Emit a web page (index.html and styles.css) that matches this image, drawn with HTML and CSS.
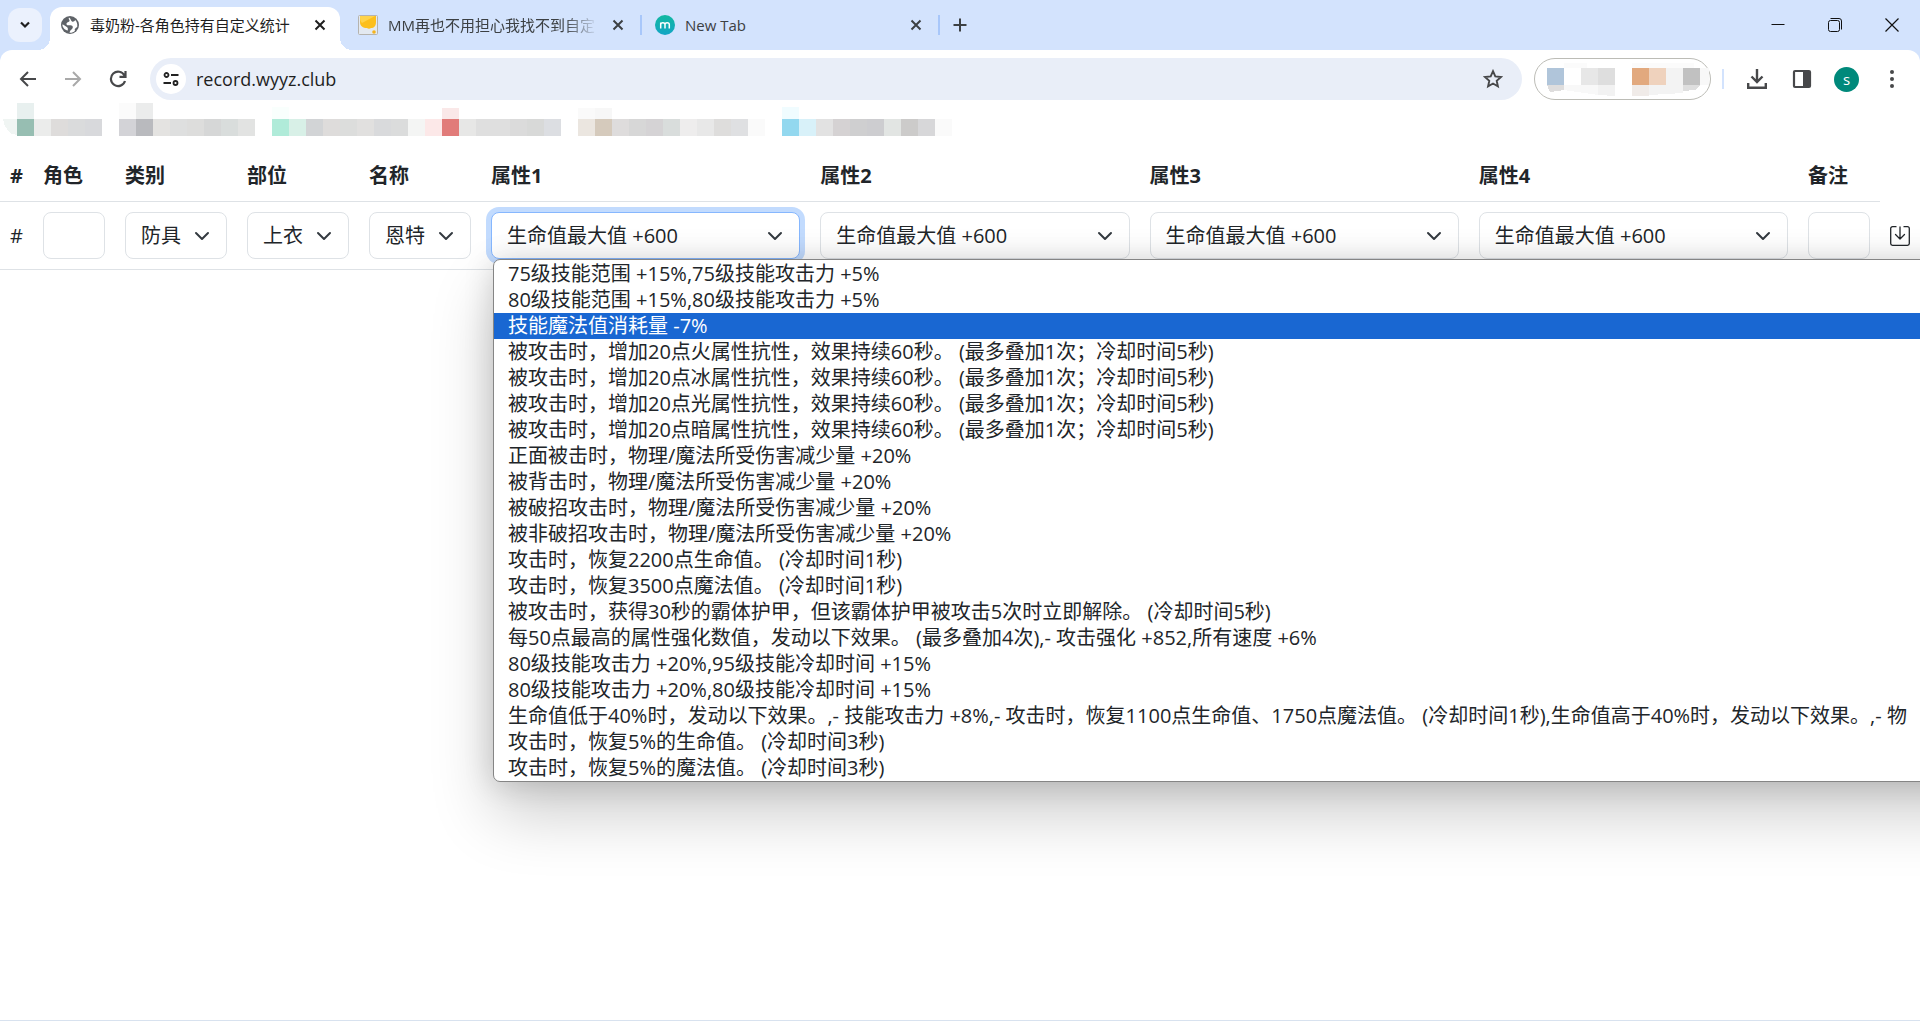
FILE: index.html
```html
<!DOCTYPE html>
<html lang="zh-CN">
<head>
<meta charset="utf-8">
<meta name="viewport" content="width=device-width, initial-scale=1">
<title>毒奶粉-各角色持有自定义统计</title>
<link rel="stylesheet" href="styles.css">
</head>
<body>
<svg class="defs" aria-hidden="true">
  <symbol id="x" viewBox="0 0 12 12"><path d="M1.5 1.5l9 9M10.500 1.500l-9 9" fill="none" stroke="currentColor" stroke-width="2"/></symbol>
  <symbol id="chevron" viewBox="0 0 16 16"><path d="m2 5 6 6 6-6" fill="none" stroke="#343a40" stroke-linecap="round" stroke-linejoin="round" stroke-width="2"/></symbol>
</svg>

<header class="browser">
  <div class="tab-strip">
    <button class="tab-search" aria-label="搜索标签页"><svg width="12" height="12" viewBox="0 0 12 12"><path d="M2 3.500l4 4 4-4" fill="none" stroke="#1f1f1f" stroke-width="2.200"/></svg></button>
    <div class="tab tab-active">
      <svg width="20" height="20" viewBox="0 0 20 20"><circle cx="10" cy="10" r="9" fill="#5f6368"/><path d="M9 2.500c-1 2 1 2 .5 3.500s-3 1-3 3 3 1 5 1.500 1.500 3 0 4-1.500 2-2 3.200c2 .2 4-.5 5.500-2-1-1.500.5-2.500 2.200-3.700.5-3-.5-5.500-2-7-.7 1.500-2 2-3.200 1.500S11 3.500 9 2.500zM2.300 9.500c1.500 0 3 1.500 4.500 2.500s1 2 1 3.500c-3-.5-5.300-3-5.500-6z" fill="#fff"/></svg>
      <span class="tab-title">毒奶粉-各角色持有自定义统计</span>
      <button class="tab-close" aria-label="关闭"><svg width="12" height="12"><use href="#x"/></svg></button>
    </div>
    <div class="tab tab-second">
      <svg width="20" height="20" viewBox="0 0 20 20"><rect x=".5" y=".5" width="19" height="19" rx="1" fill="#e3e9f0" stroke="#b5b3ae"/><path d="M2 1h16v6c0 4-2 6-5 6-1 1-3 1-4 0C5 13 2 11 2 7z" fill="#fcbf1c"/><path d="M2 1h15L4 8C2 6 2 4 2 1z" fill="#ffd34a"/><circle cx="16" cy="17" r="1.800" fill="#f5b31b"/></svg>
      <span class="tab-title tab-title-fade">MM再也不用担心我找不到自定</span>
      <button class="tab-close" aria-label="关闭"><svg width="12" height="12"><use href="#x"/></svg></button>
    </div>
    <div class="tab tab-third">
      <svg width="20" height="20" viewBox="0 0 20 20"><defs><linearGradient id="teal" x2="0" y2="1"><stop stop-color="#12b8a0"/><stop offset="1" stop-color="#12a5c5"/></linearGradient></defs><circle cx="10" cy="10" r="10" fill="url(#teal)"/><path d="M5.700 13.500V7.500M5.700 9.500c0-2.500 4.300-2.500 4.300 0v4M10 9.500c0-2.500 4.300-2.500 4.300 0v4" fill="none" stroke="#fff" stroke-width="1.500"/></svg>
      <span class="tab-title">New Tab</span>
      <button class="tab-close" aria-label="关闭"><svg width="12" height="12"><use href="#x"/></svg></button>
    </div>
    <button class="new-tab" aria-label="新标签页"><svg width="14" height="14" viewBox="0 0 14 14"><path d="M7 .5v13M.5 7h13" stroke="#3c4043" stroke-width="2"/></svg></button>
    <div class="window-controls">
      <button aria-label="最小化"><svg width="14" height="14" viewBox="0 0 14 14"><path d="M.5 6.500h13" stroke="#111"/></svg></button>
      <button aria-label="还原"><svg width="14" height="14" viewBox="0 0 14 14"><rect x=".5" y="2.500" width="11" height="11" rx="2" fill="none" stroke="#111"/><path d="M2.500.5H11a2.500 2.500 0 0 1 2.500 2.500v8.500" fill="none" stroke="#111"/></svg></button>
      <button aria-label="关闭窗口"><svg width="14" height="14" viewBox="0 0 14 14"><path d="M.5.5l13 13M13.500.5l-13 13" stroke="#111" stroke-width="1.200"/></svg></button>
    </div>
  </div>

  <div class="toolbar">
    <div class="nav">
      <button aria-label="后退"><svg width="18" height="18" viewBox="0 0 18 18"><path d="M17 9H2M9 2L2 9l7 7" fill="none" stroke="#47484a" stroke-width="2"/></svg></button>
      <button aria-label="前进"><svg width="18" height="18" viewBox="0 0 18 18"><path d="M1 9h15M9 2l7 7-7 7" fill="none" stroke="#a9a9a9" stroke-width="2"/></svg></button>
      <button aria-label="刷新"><svg width="18" height="18" viewBox="0 0 18 18"><path d="M15.500 5.500A7.200 7.200 0 1 0 16 11M16.500 1v5.800h-6" fill="none" stroke="#47484a" stroke-width="2.200"/></svg></button>
    </div>
    <div class="omnibox">
      <button class="site-info" aria-label="网站信息"><svg width="16" height="16" viewBox="0 0 16 16"><circle cx="3.500" cy="4" r="2" fill="none" stroke="#222" stroke-width="1.800"/><circle cx="12.500" cy="12" r="2" fill="none" stroke="#222" stroke-width="1.800"/><path d="M8 4h7.500M.5 12H8" stroke="#222" stroke-width="2"/></svg></button>
      <input class="url" type="text" aria-label="地址" value="record.wyyz.club">
      <button class="star" aria-label="收藏"><svg width="20" height="20" viewBox="0 0 20 20"><path d="M10 2.200l2.300 5.200 5.700.6-4.300 3.800 1.200 5.600L10 14.500l-4.900 2.900 1.200-5.600L2 8l5.700-.6z" fill="none" stroke="#47484a" stroke-width="1.900"/></svg></button>
    </div>
    <svg class="extensions" width="178" height="42" viewBox="0 0 178 42" role="img" aria-label="扩展程序">
      <rect x=".5" y=".5" width="176" height="41" rx="20.500" fill="#fff" stroke="#bcbcb6"/>
      <g shape-rendering="crispEdges"><path d="M13 10h17v17H13z" fill="#b0c5da"/><path d="M13 27h17v5l-14 2z" fill="#dedddd"/><path d="M30 5h23v5H30zM98 5h62v5H98z" fill="#fbfbfb"/><path d="M47 10h17v17H47z" fill="#e7e7e7"/><path d="M64 10h17v17H64z" fill="#dedede"/><path d="M30 27h34v10l-34-5z" fill="#f8f8f8"/><path d="M64 27h17v11l-17-1z" fill="#f2f2f2"/><path d="M98 10h17v17H98z" fill="#e2a97e"/><path d="M115 10h17v17h-17z" fill="#efd2bd"/><path d="M98 27h17v11H98z" fill="#f0ebe8"/><path d="M115 27h34v8l-34 2zM132 10h17v17h-17z" fill="#f3f3f3"/><path d="M149 10h17v17h-17z" fill="#c1c1c1"/><path d="M149 27h17l-5 5-12 1z" fill="#dedede"/><path d="M166 10h9v17h-9z" fill="#f8f8f8"/></g>
    </svg>
    <div class="actions">
      <span class="rule"></span>
      <button aria-label="下载"><svg width="20" height="20" viewBox="0 0 20 20"><path d="M10 0v13M4.500 7.500L10 13l5.500-5.500M1.200 14v4.800h17.600V14" fill="none" stroke="#47484a" stroke-width="2.400"/></svg></button>
      <button aria-label="侧边栏"><svg width="20" height="20" viewBox="0 0 20 20"><rect x="2" y="2" width="16" height="16" rx="1" fill="none" stroke="#47484a" stroke-width="2.200"/><path d="M11 2h7v16h-7z" fill="#47484a"/></svg></button>
      <button class="avatar" aria-label="个人资料">s</button>
      <button aria-label="菜单"><svg width="20" height="20" viewBox="0 0 20 20" fill="#47484a"><circle cx="10" cy="3" r="2"/><circle cx="10" cy="10" r="2"/><circle cx="10" cy="17" r="2"/></svg></button>
    </div>
  </div>

  <div class="bookmarks">
    <svg width="960" height="34" viewBox="0 0 960 34" shape-rendering="crispEdges" role="img" aria-label="书签">
      <path d="M17 0h17v16H17z" fill="#e8f0ef"/><path d="M119 0h17v16h-17z" fill="#fbfbfb"/><path d="M136 0h17v16h-17z" fill="#ebecec"/><path d="M272 4h17v12h-17z" fill="#f9fffd"/><path d="M442 5h17v11h-17z" fill="#fae8e8"/><path d="M578 5h17v11h-17z" fill="#fafafa"/><path d="M595 5h17v11h-17z" fill="#f7f7f7"/><path d="M782 4h17v12h-17z" fill="#f0fcff"/>
      <path d="M3 16h14v16c-8 0-13-8-14-16z" fill="#f0f5f3"/>
      <g transform="translate(0 16)">
        <path d="M17 0h17v17H17z" fill="#97beb2"/><path d="M34 0h17v17H34z" fill="#ebeceb"/><path d="M51 0h17v17H51z" fill="#dedcdb"/><path d="M68 0h17v17H68z" fill="#dadbdc"/><path d="M85 0h17v17H85z" fill="#d8d9dc"/>
        <path d="M119 0h17v17h-17z" fill="#d3d3d7"/><path d="M136 0h17v17h-17z" fill="#b9babe"/><path d="M153 0h17v17h-17z" fill="#e4e3e1"/><path d="M170 0h17v17h-17z" fill="#dedfdf"/><path d="M187 0h17v17h-17z" fill="#dddddc"/><path d="M204 0h17v17h-17z" fill="#d6d7d7"/><path d="M221 0h17v17h-17z" fill="#d9dddc"/><path d="M238 0h17v17h-17z" fill="#e2e3e2"/>
        <path d="M272 0h17v17h-17z" fill="#b0ebd9"/><path d="M289 0h17v17h-17z" fill="#d8f0e7"/><path d="M306 0h17v17h-17z" fill="#d2d4d6"/><path d="M323 0h17v17h-17z" fill="#dedcdb"/><path d="M340 0h17v17h-17z" fill="#dcdddc"/><path d="M357 0h17v17h-17z" fill="#e1e0df"/><path d="M374 0h17v17h-17z" fill="#d9dadc"/><path d="M391 0h17v17h-17z" fill="#dbdcdc"/><path d="M408 0h17v17h-17z" fill="#f4f5f4"/>
        <path d="M425 0h17v17h-17z" fill="#fce8e8"/><path d="M442 0h17v17h-17z" fill="#e17b79"/><path d="M459 0h17v17h-17z" fill="#e7e7e6"/><path d="M476 0h34v17h-34z" fill="#dfdfdf"/><path d="M510 0h17v17h-17z" fill="#dbdbdb"/><path d="M527 0h17v17h-17z" fill="#d8d9d8"/><path d="M544 0h17v17h-17z" fill="#dcdee2"/>
        <path d="M578 0h17v17h-17z" fill="#ebe6e0"/><path d="M595 0h17v17h-17z" fill="#d5cabc"/><path d="M612 0h17v17h-17z" fill="#dedcdc"/><path d="M629 0h17v17h-17z" fill="#d7d7d7"/><path d="M646 0h17v17h-17z" fill="#d5d3d5"/><path d="M663 0h17v17h-17z" fill="#d9dddc"/><path d="M680 0h17v17h-17z" fill="#eeeded"/><path d="M697 0h17v17h-17z" fill="#e8e8e8"/><path d="M714 0h17v17h-17z" fill="#dedddc"/><path d="M731 0h17v17h-17z" fill="#dfe0e2"/><path d="M748 0h17v17h-17z" fill="#fafafa"/>
        <path d="M782 0h17v17h-17z" fill="#93d8ef"/><path d="M799 0h17v17h-17z" fill="#d8f1f9"/><path d="M816 0h17v17h-17z" fill="#e2e2e2"/><path d="M833 0h17v17h-17z" fill="#d5d2d3"/><path d="M850 0h17v17h-17z" fill="#cfcfd0"/><path d="M867 0h17v17h-17z" fill="#cdcdd0"/><path d="M884 0h17v17h-17z" fill="#e2e5e3"/><path d="M901 0h17v17h-17z" fill="#cccbca"/><path d="M918 0h17v17h-17z" fill="#d7d7d9"/><path d="M935 0h17v17h-17z" fill="#fafafa"/>
      </g>
    </svg>
  </div>
</header>

<main>
  <table class="records">
    <colgroup><col class="col-index"><col class="col-text"><col class="col-kind"><col class="col-kind"><col class="col-kind"><col><col><col><col><col class="col-text"><col class="col-save"></colgroup>
    <thead>
      <tr><th scope="col">#</th><th scope="col">角色</th><th scope="col">类别</th><th scope="col">部位</th><th scope="col">名称</th><th scope="col">属性1</th><th scope="col">属性2</th><th scope="col">属性3</th><th scope="col">属性4</th><th scope="col">备注</th></tr>
    </thead>
    <tbody>
      <tr>
        <td>#</td>
        <td><input class="field" type="text" aria-label="角色"></td>
        <td><div class="select"><select class="field" aria-label="类别"><option>防具</option></select><svg width="16" height="16"><use href="#chevron"/></svg></div></td>
        <td><div class="select"><select class="field" aria-label="部位"><option>上衣</option></select><svg width="16" height="16"><use href="#chevron"/></svg></div></td>
        <td><div class="select"><select class="field" aria-label="名称"><option>恩特</option></select><svg width="16" height="16"><use href="#chevron"/></svg></div></td>
        <td>
          <div class="select">
            <select class="field field-focus" aria-label="属性1"><option>生命值最大值 +600</option></select><svg width="16" height="16"><use href="#chevron"/></svg>
            <ul class="options" role="listbox" aria-label="属性1">
              <li role="option">75级技能范围 +15%,75级技能攻击力 +5%</li>
              <li role="option">80级技能范围 +15%,80级技能攻击力 +5%</li>
              <li role="option" class="highlighted" aria-selected="true">技能魔法值消耗量 -7%</li>
              <li role="option">被攻击时，增加20点火属性抗性，效果持续60秒。 (最多叠加1次；冷却时间5秒)</li>
              <li role="option">被攻击时，增加20点冰属性抗性，效果持续60秒。 (最多叠加1次；冷却时间5秒)</li>
              <li role="option">被攻击时，增加20点光属性抗性，效果持续60秒。 (最多叠加1次；冷却时间5秒)</li>
              <li role="option">被攻击时，增加20点暗属性抗性，效果持续60秒。 (最多叠加1次；冷却时间5秒)</li>
              <li role="option">正面被击时，物理/魔法所受伤害减少量 +20%</li>
              <li role="option">被背击时，物理/魔法所受伤害减少量 +20%</li>
              <li role="option">被破招攻击时，物理/魔法所受伤害减少量 +20%</li>
              <li role="option">被非破招攻击时，物理/魔法所受伤害减少量 +20%</li>
              <li role="option">攻击时，恢复2200点生命值。 (冷却时间1秒)</li>
              <li role="option">攻击时，恢复3500点魔法值。 (冷却时间1秒)</li>
              <li role="option">被攻击时，获得30秒的霸体护甲，但该霸体护甲被攻击5次时立即解除。 (冷却时间5秒)</li>
              <li role="option">每50点最高的属性强化数值，发动以下效果。 (最多叠加4次),- 攻击强化 +852,所有速度 +6%</li>
              <li role="option">80级技能攻击力 +20%,95级技能冷却时间 +15%</li>
              <li role="option">80级技能攻击力 +20%,80级技能冷却时间 +15%</li>
              <li role="option">生命值低于40%时，发动以下效果。,- 技能攻击力 +8%,- 攻击时，恢复1100点生命值、1750点魔法值。 (冷却时间1秒),生命值高于40%时，发动以下效果。,- 物</li>
              <li role="option">攻击时，恢复5%的生命值。 (冷却时间3秒)</li>
              <li role="option">攻击时，恢复5%的魔法值。 (冷却时间3秒)</li>
            </ul>
          </div>
        </td>
        <td><div class="select"><select class="field" aria-label="属性2"><option>生命值最大值 +600</option></select><svg width="16" height="16"><use href="#chevron"/></svg></div></td>
        <td><div class="select"><select class="field" aria-label="属性3"><option>生命值最大值 +600</option></select><svg width="16" height="16"><use href="#chevron"/></svg></div></td>
        <td><div class="select"><select class="field" aria-label="属性4"><option>生命值最大值 +600</option></select><svg width="16" height="16"><use href="#chevron"/></svg></div></td>
        <td><input class="field" type="text" aria-label="备注"></td>
        <td><button class="save" aria-label="保存"><svg width="20" height="20" viewBox="0 0 20 20"><path d="M6 .7H2.500A1.800 1.800 0 0 0 .7 2.500v15a1.800 1.800 0 0 0 1.800 1.800h15a1.800 1.800 0 0 0 1.800-1.800v-15A1.800 1.800 0 0 0 17.500.7H14M10 1v12M5.500 8.500L10 13l4.500-4.500" fill="none" stroke="#212529" stroke-width="1.300" stroke-linecap="round" stroke-linejoin="round"/></svg></button></td>
      </tr>
    </tbody>
  </table>
</main>
</body>
</html>
```

FILE: styles.css
```css
* { box-sizing: border-box; }

body {
  margin: 0;
  min-height: 100vh;
  overflow: hidden;
  background: #fff;
  border-bottom: 1px solid #d8e2ef;
  color: #212529;
  font: 20px/30px "Open Sans", "Noto Sans CJK SC", sans-serif;
}

button {
  display: grid;
  place-items: center;
  padding: 0;
  border: 0;
  background: none;
  color: inherit;
}

svg { display: block; flex: none; }
.defs { position: absolute; width: 0; height: 0; }

/* Browser window */
.browser { background: #d3e3fd; }

.tab-strip {
  display: flex;
  align-items: center;
  height: 50px;
  padding-left: 8px;
  font-size: 15px;
  line-height: 20px;
  color: #3c4043;
}

.tab-search {
  width: 34px;
  height: 34px;
  border-radius: 12px;
  background: #ebf1fd;
}

.tab {
  display: flex;
  align-items: center;
  gap: 10px;
  height: 34px;
}

.tab-active {
  position: relative;
  width: 290px;
  height: 43px;
  margin: 7px 0 0 8px;
  padding: 0 10px 7px;
  border-radius: 12px 12px 0 0;
  background: #fff;
  color: #1f1f1f;
}

.tab-active::before,
.tab-active::after {
  content: "";
  position: absolute;
  bottom: 0;
  width: 12px;
  height: 12px;
}
.tab-active::before { right: 100%; background: radial-gradient(circle at 0 0, transparent 12px, #fff 12px); }
.tab-active::after { left: 100%; background: radial-gradient(circle at 100% 0, transparent 12px, #fff 12px); }

.tab-second,
.tab-third {
  width: 302px;
  padding: 0 12px 0 18px;
  border-right: 2px solid #a8c7fa;
  height: 20px;
}
.tab-third { width: 298px; padding-left: 13px; }

.tab-title {
  flex: 1;
  overflow: hidden;
  white-space: nowrap;
}
.tab-title-fade {
  -webkit-mask-image: linear-gradient(to right, #000 84%, transparent);
  mask-image: linear-gradient(to right, #000 84%, transparent);
}
.tab-close { width: 20px; height: 20px; }
.new-tab { width: 40px; height: 34px; }

.window-controls { display: flex; margin-left: auto; }
.window-controls button { width: 57px; height: 48px; }

.toolbar {
  display: flex;
  align-items: center;
  height: 50px;
  padding: 8px 6px 0 5px;
  border-radius: 12px 12px 0 0;
  background: #fff;
}
.nav { display: flex; }
.nav button { width: 45px; height: 42px; }

.omnibox {
  display: flex;
  flex: 1;
  align-items: center;
  height: 42px;
  margin: 0 12px 0 10px;
  padding: 0 19px 0 6px;
  border-radius: 21px;
  background: #e9eef8;
}
.site-info { width: 30px; height: 30px; border-radius: 50%; background: #fff; }
.url {
  flex: 1;
  min-width: 0;
  padding: 0 10px;
  border: 0;
  background: none;
  color: #1f1f1f;
  font: 18px/30px "Open Sans", sans-serif;
}

.actions { display: flex; align-items: center; }
.actions button { width: 45px; height: 42px; }
.rule { width: 2px; height: 20px; margin: 0 10px; background: #d3e3fd; }
.actions .avatar {
  width: 25px;
  height: 25px;
  margin: 0 10px;
  border-radius: 50%;
  background: #00897b;
  color: #fff;
  font: 15px/20px "Open Sans", sans-serif;
}

.bookmarks { height: 51px; padding-top: 3px; background: #fff; }

/* Records table */
.records {
  width: 100%;
  table-layout: fixed;
  border-collapse: separate;
  border-spacing: 0;
}
.col-index { width: 33px; }
.col-text { width: 82px; }
.col-kind { width: 122px; }
.col-save { width: 40px; }

th, td {
  padding: 10px;
  border-bottom: 1px solid #dee2e6;
  text-align: left;
  vertical-align: middle;
  white-space: nowrap;
}

.select { position: relative; display: grid; align-items: center; }
.select > .field, .select > svg { grid-area: 1 / 1; }
.select > svg { justify-self: end; margin-right: 17px; pointer-events: none; }

.field {
  display: block;
  width: 100%;
  height: 47px;
  padding: 0 15px;
  border: 1px solid #dee2e6;
  border-radius: 8px;
  background: #fff;
  color: inherit;
  font: inherit;
  appearance: none;
  outline: 0;
}
.field-focus { border-color: #86b7fe; box-shadow: 0 0 0 5px #c2dbfe; }

.save { width: 20px; height: 20px; }

.options {
  position: absolute;
  z-index: 1;
  top: 100%;
  left: 2px;
  min-width: 100vw;
  margin: 0;
  padding: 1px 0 0;
  border: 1px solid #858585;
  border-radius: 7px;
  background: #fff;
  box-shadow: 0 32px 64px rgba(0, 0, 0, .2), 0 2px 30px rgba(0, 0, 0, .16);
  list-style: none;
  line-height: 26px;
}
.options li { padding: 0 14px; }
.options .highlighted { background: #1967d2; color: #fff; }
```
